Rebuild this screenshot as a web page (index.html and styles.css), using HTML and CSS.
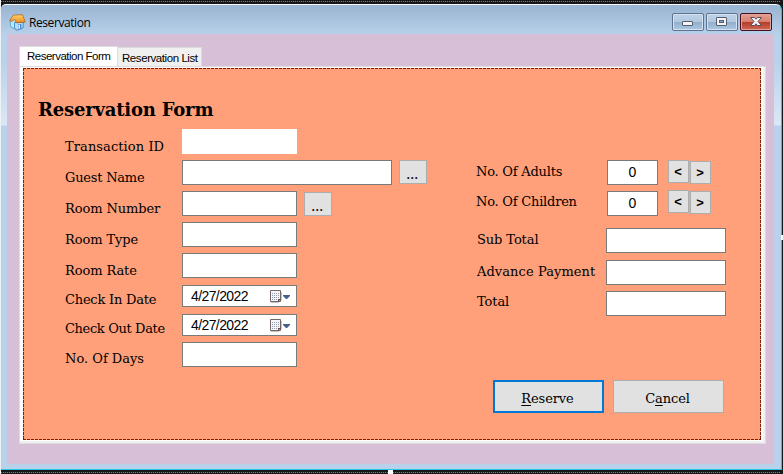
FILE: index.html
```html
<!DOCTYPE html>
<html lang="en">
<head>
<meta charset="utf-8">
<title>Reservation</title>
<link rel="stylesheet" href="styles.css">
</head>
<body>
<div class="window">
  <header class="titlebar">
    <svg class="app-icon" width="17" height="17" viewBox="0 0 17 17">
      <defs><linearGradient id="g" x1="0" y1="0" x2="0" y2="1"><stop offset="0" stop-color="#ffd36b"/><stop offset="1" stop-color="#f08a1c"/></linearGradient></defs>
      <path d="M1 7.500 5.500 5 8 9v7L2 13z" fill="#bfeafa" stroke="#4b9fd0" stroke-width=".8"/>
      <path d="M5.500 8.500H14.300L14 14 8 16.300 5.500 14z" fill="#b4dcf7" stroke="#2f7cc4" stroke-width=".8"/>
      <path d="M9 10.500 12.300 10v4.500L9 15.600z" fill="#3f86d0"/>
      <path d="M9.500 11 11 10.800v3.700l-1.500.5z" fill="#e9f8ff"/>
      <path d="M4.500 1 13.500 .8 16.300 8 7.500 8.800 5.500 5.500 2.800 7.500 .6 6.500z" fill="url(#g)" stroke="#a56019" stroke-width=".7"/>
    </svg>
    <span class="title">Reservation</span>
    <div class="controls">
      <span class="ctl"><svg width="30" height="16" viewBox="0 0 30 16"><rect x="9.500" y="7.500" width="10" height="4" rx=".5" fill="#f4f4f4" stroke="#535d70"/></svg></span>
      <span class="ctl"><svg width="30" height="16" viewBox="0 0 30 16"><rect x="9.500" y="3.500" width="10" height="8" rx=".5" fill="#f4f4f4" stroke="#535d70"/><rect x="12.500" y="6.500" width="4" height="2" fill="#8aa9cb" stroke="#535d70"/></svg></span>
      <span class="ctl close"><svg width="30" height="16" viewBox="0 0 30 16"><path d="M9.500 3.500h4L15 5.200l1.500-1.700h4L17 7.500l3.500 4h-4L15 9.800l-1.500 1.700h-4L13 7.500z" fill="#f5f3f3" stroke="#565060"/></svg></span>
    </div>
  </header>
  <main class="client">
    <nav class="tabs"><span class="tab active">Reservation Form</span><span class="tab">Reservation List</span></nav>
    <div class="page">
      <form class="panel">
        <h1>Reservation Form</h1>
        <div class="columns">
          <section class="guest">
            <div class="row"><label class="loose">Transaction ID</label><span class="field flat"></span></div>
            <div class="row"><label class="snug">Guest Name</label><span class="field wide"></span><button type="button" class="browse raised">...</button></div>
            <div class="row"><label>Room Number</label><span class="field"></span><button type="button" class="browse">...</button></div>
            <div class="row"><label>Room Type</label><span class="field"></span></div>
            <div class="row rate"><label>Room Rate</label><span class="field"></span></div>
            <div class="row date-row"><label class="snug">Check In Date</label><span class="field date"><span class="date-text">4/27/2022</span><svg class="cal" width="22" height="14" viewBox="0 0 22 14"><path d="M2 12.500H9.500L12.500 10V2" fill="none" stroke="#c9c4c4"/><path d="M1.500 .5h10v11h-10z" fill="#f4f5f8" stroke="#766565"/><path d="M3 3.500h7M3 5.500h7M3 7.500h7M3 9.500h5" stroke="#929bae" stroke-dasharray="1 1"/><path d="M9 12V9h3z" fill="#5b4e4e"/><path d="M14 5h7v1l-3 3h-1l-3-3z" fill="#46608c"/></svg></span></div>
            <div class="row date-row last"><label class="tight">Check Out Date</label><span class="field date"><span class="date-text">4/27/2022</span><svg class="cal" width="22" height="14" viewBox="0 0 22 14"><path d="M2 12.500H9.500L12.500 10V2" fill="none" stroke="#c9c4c4"/><path d="M1.500 .5h10v11h-10z" fill="#f4f5f8" stroke="#766565"/><path d="M3 3.500h7M3 5.500h7M3 7.500h7M3 9.500h5" stroke="#929bae" stroke-dasharray="1 1"/><path d="M9 12V9h3z" fill="#5b4e4e"/><path d="M14 5h7v1l-3 3h-1l-3-3z" fill="#46608c"/></svg></span></div>
            <div class="row"><label class="days">No. Of Days</label><span class="field"></span></div>
          </section>
          <section class="billing">
            <div class="count"><label class="snug">No. Of Adults</label><span class="field num">0</span><button type="button" class="step">&lt;</button><button type="button" class="step next">&gt;</button></div>
            <div class="count second"><label class="snug">No. Of Children</label><span class="field num">0</span><button type="button" class="step">&lt;</button><button type="button" class="step next">&gt;</button></div>
            <div class="amount sub"><label>Sub Total</label><span class="field"></span></div>
            <div class="amount"><label class="loose">Advance Payment</label><span class="field"></span></div>
            <div class="amount total"><label>Total</label><span class="field"></span></div>
            <div class="actions"><button type="button" class="action primary"><u>R</u>eserve</button><button type="button" class="action">C<u>a</u>ncel</button></div>
          </section>
        </div>
      </form>
    </div>
  </main>
</div>
<i class="dots top"></i><i class="dots bottom"></i>
<i class="grip side"></i><i class="grip base"></i>
</body>
</html>
```
FILE: styles.css
```css
* { box-sizing: border-box; }
body { margin: 0; width: 783px; height: 474px; overflow: hidden; background: #171719; border-left: 1px solid #eef2f6; padding-top: 4px; font-family: "Liberation Sans", sans-serif; color: #000; }
.window { width: 781px; height: 466px; padding: 0 6px 5px; border-top: 1px solid #f7fbff; border-right: 1px solid #26c7e5; border-bottom: 1px solid #26c7e5; border-radius: 5px 6px 0 0; background: linear-gradient(#99b4d1 0, #b9d1ea 30px, #b9d1ea 55px, #dbe7f4 120px, #b9d1ea 121px); }
.titlebar { height: 29px; display: flex; align-items: flex-start; padding: 8px 3px 0 2px; }
.app-icon { flex: none; margin-top: 1px; }
.title { font: 12px/16px "Open Sans", sans-serif; letter-spacing: -.42px; margin: 2px 0 0 3px; }
.controls { display: flex; gap: 2px; margin-left: auto; }
.ctl { width: 32px; height: 18px; border: 1px solid #5d7391; border-radius: 2px; box-shadow: inset 0 0 0 1px #d4e2f1; background: linear-gradient(#bfd2e7 0, #b2c8df 8px, #91adca 8px, #aec8e2); display: block; line-height: 0; }
.ctl.close { border-color: #461022; box-shadow: inset 0 0 0 1px #dfa39b; background: linear-gradient(#e5a193, #d87e6d 8px, #b43b25 8px, #d06a55); }
.client { height: 430px; width: 767px; background: #d8bfd8; padding: 12px 0 0 12px; }
.tabs { display: flex; height: 20px; align-items: flex-end; }
.tab { height: 19px; border: 1px solid #dcdcdc; border-bottom: 0; background: #f0f0f0; font-size: 11.5px; line-height: 20px; letter-spacing: -.43px; white-space: nowrap; padding-left: 4px; width: 84px; border-left: 0; }
.tab.active { width: 99px; height: 20px; background: #fff; padding: 0 0 0 7px; line-height: 19px; letter-spacing: -.5px; border-left: 1px solid #dcdcdc; }
.page { width: 747px; height: 378px; background: #fff; border: 1px solid #dcdcdc; padding: 1px 0 0 3px; box-shadow: inset -2px -2px 0 #f0f0f0; }
.panel { width: 738px; height: 372px; padding: 28px 0 0 15px; background:
  repeating-linear-gradient(90deg, #7f1d05 0 3px, transparent 3px 4px) top / 100% 1px no-repeat,
  repeating-linear-gradient(90deg, #7f1d05 0 3px, transparent 3px 4px) bottom / 100% 1px no-repeat,
  repeating-linear-gradient(#7f1d05 0 3px, transparent 3px 4px) left / 1px 100% no-repeat,
  repeating-linear-gradient(#7f1d05 0 3px, transparent 3px 4px) right / 1px 100% no-repeat, #ffa07a; }
h1 { margin: 0; height: 33px; font: bold 18px/27px "DejaVu Serif", serif; letter-spacing: -.2px; }
.columns { display: flex; align-items: flex-start; padding-left: 27px; }
label { font: 13px/20px "DejaVu Serif", serif; letter-spacing: -.1px; white-space: nowrap; padding-top: 8px; flex: none; }
.loose { letter-spacing: .08px; }
.snug { letter-spacing: -.22px; }
.tight { letter-spacing: -.36px; }
.guest { width: 411px; flex: none; }
.row { display: flex; align-items: flex-start; height: 25px; margin-bottom: 6px; }
.row label { width: 117px; }
.rate { margin-bottom: 7px; }
.date-row { height: 22px; margin-bottom: 7px; }
.date-row.last { margin-bottom: 6px; }
.date-row label { padding-top: 5px; }
.row .days { padding-top: 7px; letter-spacing: 0; }
.field { width: 115px; height: 25px; background: #fff; border: 1px solid #7a7a7a; flex: none; }
.flat { border: 0; }
.wide { width: 210px; }
.date { height: 22px; display: flex; padding-left: 8px; font-size: 14px; line-height: 20px; }
.date-text { width: 78px; letter-spacing: -.6px; }
.cal { margin-top: 4px; }
button { font-family: "DejaVu Serif", serif; color: #000; padding: 0; border: 1px solid #adadad; background: #e1e1e1; }
.browse { width: 28px; height: 24px; margin: 1px 0 0 7px; font: 14px/22px "DejaVu Serif", serif; padding: 2px 2px 0 0; letter-spacing: -.4px; }
.browse.raised { margin-top: 0; }
.billing { padding-top: 31px; width: 260px; }
.count { display: flex; align-items: flex-start; height: 25px; margin-bottom: 6px; }
.count label { width: 131px; padding-top: 2px; }
.count.second { margin-bottom: 12px; }
.count.second label { padding-top: 1px; }
.num { width: 51px; text-align: center; font-size: 14px; line-height: 22px; }
.step { width: 21px; height: 23px; margin-left: 10px; padding-right: 1px; font: bold 13px/21px "Liberation Sans", sans-serif; }
.second .step { margin-top: -1px; }
.step.next { margin: 1px 0 0 1px; }
.second .step.next { margin-top: 0; }
.amount { display: flex; align-items: flex-start; height: 25px; margin-bottom: 6px; padding-left: 1px; }
.amount label { width: 129px; padding-top: 2px; }
.amount .field { width: 120px; }
.amount.sub { margin-bottom: 7px; }
.amount.sub label { padding-top: 2px; }
.amount.total label { padding-top: 1px; }
.actions { display: flex; gap: 9px; padding-left: 17px; margin-top: 64px; }
.action { width: 111px; height: 33px; font-size: 13px; letter-spacing: -.1px; padding: 4px 2px 0 0; flex: none; }
.primary { border: 2px solid #0078d7; }
u { text-underline-offset: 2px; }
.dots { position: absolute; left: 1px; width: 780px; height: 1px; background: repeating-linear-gradient(90deg, #77777a 0 1px, #222 1px 2px); }
.dots.top { top: 1px; }
.dots.bottom { top: 472px; }
.grip { position: absolute; background: #fff; width: 5px; height: 5px; }
.side { left: 781px; top: 235px; width: 2px; }
.base { left: 388px; top: 470px; }
```
